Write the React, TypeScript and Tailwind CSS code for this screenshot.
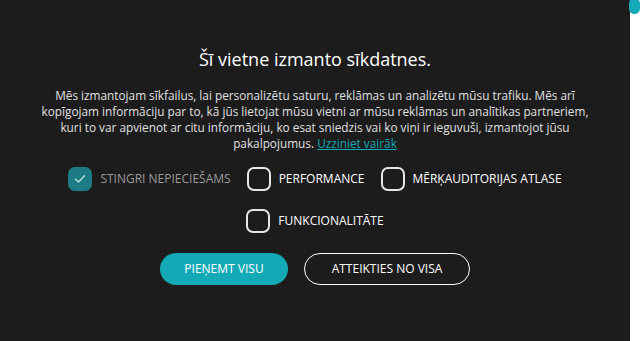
import React from "react";

function Box({ checked, label, muted }: { checked?: boolean; label: string; muted?: boolean }) {
  return (
    <label className="flex items-center gap-2">
      {checked ? (
        <span className="flex h-6 w-6 items-center justify-center rounded-[7px] bg-[#1c7b84]">
          <svg width="14" height="14" viewBox="0 0 14 14" fill="none">
            <path d="M2.5 7.2 L5.6 10 L11.5 3.8" stroke="#b9dfe3" strokeWidth="1.4" strokeLinecap="round" strokeLinejoin="round" />
          </svg>
        </span>
      ) : (
        <span className="h-6 w-6 rounded-[7px] border-2 border-[#e6e6e6]" />
      )}
      <span className={"text-[12px] uppercase " + (muted ? "text-[#9a9a9a]" : "text-white")}>{label}</span>
    </label>
  );
}

export default function App() {
  return (
    <div className="flex h-[341px] w-[640px] overflow-hidden" style={{ fontFamily: '"Open Sans", "Noto Sans", sans-serif' }}>
      <div className="flex w-[630px] flex-col items-center bg-[#1c1c1c] px-[40px] pt-[47px]">
        <h1 className="text-[18px] font-medium leading-[24px] text-white">Šī vietne izmanto sīkdatnes.</h1>
        <p className="mt-[16px] text-center text-[11.8px] leading-[16px] text-[#e0e0e0]">
          Mēs izmantojam sīkfailus, lai personalizētu saturu, reklāmas un analizētu mūsu trafiku. Mēs arī kopīgojam informāciju par to, kā jūs lietojat mūsu vietni ar mūsu reklāmas un analītikas partneriem, kuri to var apvienot ar citu informāciju, ko esat sniedzis vai ko viņi ir ieguvuši, izmantojot jūsu pakalpojumus.{" "}
          <a className="text-[#14a9b7] underline">Uzziniet vairāk</a>
        </p>
        <div className="mt-[16px] flex flex-wrap justify-center gap-x-4 gap-y-[18px]">
          <Box checked muted label="Stingri nepieciešams" />
          <Box label="Performance" />
          <Box label="Mērķauditorijas atlase" />
          <Box label="Funkcionalitāte" />
        </div>
        <div className="mt-[20px] flex gap-4">
          <button className="h-8 w-[128px] rounded-full bg-[#14a9b7] text-[12px] uppercase text-white">Pieņemt visu</button>
          <button className="h-8 w-[166px] rounded-full border border-white text-[12px] uppercase text-white">Atteikties no visa</button>
        </div>
      </div>
      <div className="w-[10px] bg-white">
        <div className="-ml-px mt-[-2px] h-[16px] w-[11px] rounded-full bg-[#13a9b8]" />
      </div>
    </div>
  );
}
